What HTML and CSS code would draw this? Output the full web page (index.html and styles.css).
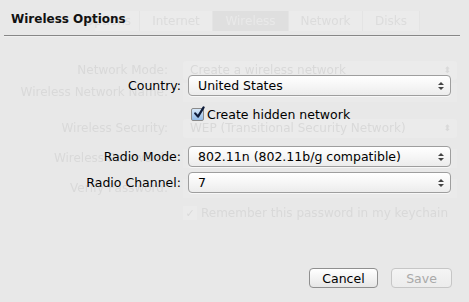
FILE: index.html
```html
<!DOCTYPE html>
<html>
<head>
<meta charset="utf-8">
<link rel="stylesheet" href="styles.css">
</head>
<body>
<div class="sheet">
  <div class="ghost" aria-hidden="true">
    <div class="g-tabs">
      <span class="g-tab">Options</span>
      <span class="g-tab">Internet</span>
      <span class="g-tab g-on">Wireless</span>
      <span class="g-tab">Network</span>
      <span class="g-tab">Disks</span>
    </div>
    <div class="g-row r1"><span class="g-label">Network Mode:</span><span class="g-box">Create a wireless network<i class="g-arr">⬍</i></span></div>
    <div class="g-row r2"><span class="g-label">Wireless Network Name:</span><span class="g-field">Rabbit</span></div>
    <div class="g-row r3"><span class="g-label">Wireless Security:</span><span class="g-box">WEP (Transitional Security Network)<i class="g-arr">⬍</i></span></div>
    <div class="g-row r4"><span class="g-label">Wireless Password:</span><span class="g-field"></span></div>
    <div class="g-row r5"><span class="g-label">Verify Password:</span><span class="g-field"></span></div>
    <div class="g-row r6"><span class="g-label"></span><span class="g-check"><b>✓</b>Remember this password in my keychain</span></div>
  </div>

  <div class="title">Wireless Options</div>
  <div class="rule"></div>

  <div class="form">
    <div class="row row-country">
      <label class="lbl">Country:</label>
      <div class="popup"><span>United States</span><span class="arrows"><i class="up"></i><i class="dn"></i></span></div>
    </div>

    <div class="row row-hidden">
      <span class="lbl"></span>
      <div class="check">
        <span class="box"><svg viewBox="0 0 14 14" width="14" height="14"><path d="M3.2 7.4 L6 10.6 L11.6 1.4" fill="none" stroke="#0d1b3a" stroke-width="2.2" stroke-linecap="round" stroke-linejoin="round"/></svg></span>
        <span>Create hidden network</span>
      </div>
    </div>

    <div class="row row-mode">
      <label class="lbl">Radio Mode:</label>
      <div class="popup"><span>802.11n (802.11b/g compatible)</span><span class="arrows"><i class="up"></i><i class="dn"></i></span></div>
    </div>

    <div class="row row-chan">
      <label class="lbl">Radio Channel:</label>
      <div class="popup"><span>7</span><span class="arrows"><i class="up"></i><i class="dn"></i></span></div>
    </div>
  </div>

  <div class="buttons">
    <button class="btn">Cancel</button>
    <button class="btn disabled">Save</button>
  </div>
</div>
</body>
</html>
```

FILE: styles.css
```css
* { box-sizing: border-box; }
html, body { margin: 0; padding: 0; }
body {
  width: 469px;
  height: 302px;
  background: #e8e8e8;
  font-family: "DejaVu Sans", "Lucida Grande", sans-serif;
  font-size: 12.5px;
  color: #000;
  overflow: hidden;
}
.sheet {
  position: relative;
  width: 469px;
  height: 302px;
  display: flex;
  flex-direction: column;
}

/* faded content of the window behind the sheet */
.ghost {
  position: absolute;
  inset: 0;
  color: #d9d9d9;
  z-index: 0;
  font-size: 12px;
  filter: blur(0.6px);
}
.g-tabs {
  position: absolute;
  top: 11px;
  left: 95px;
  display: flex;
  height: 20px;
}
.g-tab {
  display: flex;
  align-items: center;
  justify-content: center;
  background: #ebebeb;
  border-right: 1px solid #e4e4e4;
  color: #dcdcdc;
}
.g-tab:nth-child(1) { width: 45px; justify-content: flex-end; padding-right: 8px; }
.g-tab:nth-child(2) { width: 73px; }
.g-tab:nth-child(3) { width: 76px; background: #dfdfdf; color: #e9e9e9; }
.g-tab:nth-child(4) { width: 74px; }
.g-tab:nth-child(5) { width: 57px; }
.g-row {
  position: absolute;
  left: 0;
  right: 0;
  display: flex;
  align-items: center;
  height: 20px;
}
.g-row.r1 { top: 60px; }
.g-row.r2 { top: 82px; }
.g-row.r3 { top: 118px; }
.g-row.r4 { top: 148px; }
.g-row.r5 { top: 178px; }
.g-row.r6 { top: 203px; }
.g-label {
  width: 168px;
  text-align: right;
}
.g-box, .g-field, .g-check {
  margin-left: 15px;
  width: 274px;
  height: 19px;
  display: flex;
  align-items: center;
  padding-left: 7px;
  position: relative;
}
.g-box { background: #ebebeb; border-radius: 3px; }
.g-arr { position: absolute; right: 6px; font-style: normal; font-size: 9px; }
.g-field { background: #eaeaea; }
.g-check { padding-left: 0; }
.g-check b {
  display: inline-flex;
  width: 14px; height: 14px;
  margin-right: 4px;
  background: #ebebeb;
  font-weight: normal;
  font-size: 11px;
  align-items: center; justify-content: center;
}

/* sheet content */
.title {
  position: relative;
  z-index: 1;
  padding: 12px 0 0 11px;
  height: 35px;
  font-weight: bold;
  font-size: 12px;
  color: #111;
}
.rule {
  position: relative;
  z-index: 1;
  margin: 0 9px 0 4px;
  height: 2px;
  border-top: 1px solid #878787;
  border-bottom: 1px solid #f0f0f0;
}
.form {
  position: relative;
  z-index: 1;
  display: flex;
  flex-direction: column;
  margin-top: 38px;
}
.row {
  display: flex;
  align-items: center;
  gap: 7px;
  height: 21px;
}
.row-hidden { margin-top: 8px; height: 20px; }
.row-mode { margin-top: 22px; }
.row-chan { margin-top: 5px; }
.lbl {
  width: 181px;
  text-align: right;
  flex: none;
}
.popup {
  width: 263px;
  display: flex;
  align-items: center;
  justify-content: space-between;
  padding: 0 6px 0 9px;
  height: 21px;
  border: 1px solid #9e9e9e;
  border-radius: 4px;
  background: linear-gradient(#ffffff, #f6f6f6 50%, #ececec);
  box-shadow: 0 1px 0 rgba(255,255,255,0.6);
}
.arrows {
  display: flex;
  flex-direction: column;
  gap: 2px;
}
.arrows i {
  display: block;
  width: 0; height: 0;
  border-left: 3px solid transparent;
  border-right: 3px solid transparent;
}
.arrows .up { border-bottom: 3px solid #444; }
.arrows .dn { border-top: 3px solid #444; }

.check {
  display: flex;
  align-items: center;
  padding-left: 3px;
  gap: 3px;
}
.box {
  width: 13px;
  height: 13px;
  border: 1px solid #8a8a8a;
  border-radius: 2px;
  background: linear-gradient(#d6e7f8, #92bbe8);
  position: relative;
}
.box svg { position: absolute; left: 0; top: -3px; }

.buttons {
  position: relative;
  z-index: 1;
  margin-top: auto;
  margin-bottom: 14px;
  display: flex;
  justify-content: flex-end;
  gap: 13px;
  padding-right: 17px;
}
.btn {
  font-family: inherit;
  font-size: 12.5px;
  height: 20px;
  padding: 0;
  border: 1px solid #8f8f8f;
  border-radius: 4px;
  background: linear-gradient(#ffffff, #f3f3f3 50%, #e6e6e6);
  color: #000;
}
.btn:first-child { width: 69px; }
.btn.disabled { width: 61px; color: #a9a9a9; border-color: #c6c6c6; background: linear-gradient(#f4f4f4, #ececec); }
```
